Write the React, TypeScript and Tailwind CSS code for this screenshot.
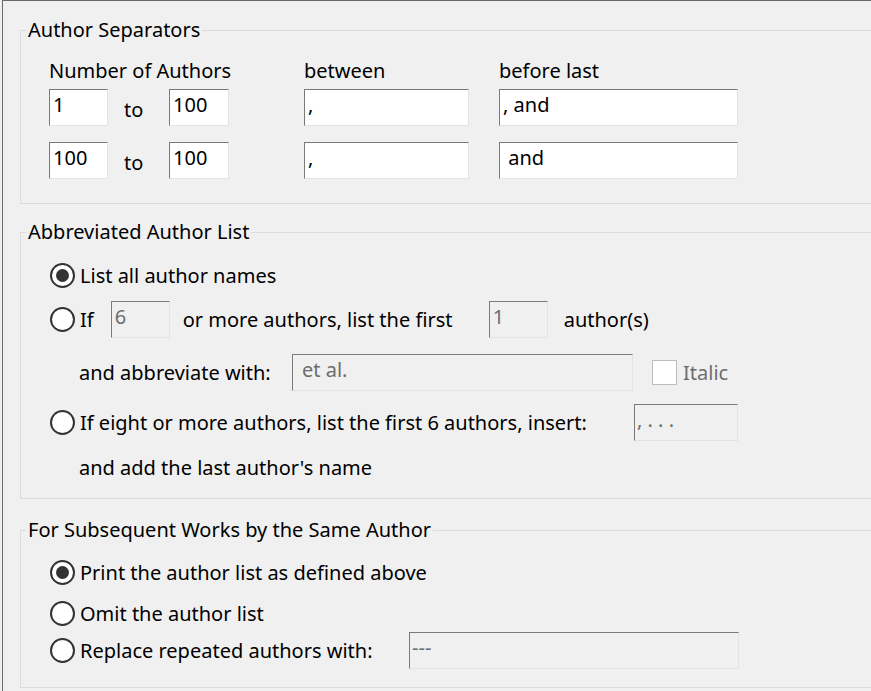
import { FC, ReactNode } from "react";
import clsx from "clsx";

interface FieldProps {
  value: string;
  width: string;
  disabled?: boolean;
  pad?: string;
}

const Field: FC<FieldProps> = ({ value, width, disabled = false, pad = "pl-[3px]" }) => (
  <input
    readOnly
    defaultValue={value}
    className={clsx(
      "h-[37px] shrink-0 border border-t-[#7a7a7a] border-l-[#7a7a7a] border-r-[#e3e3e3] border-b-[#e3e3e3] pb-[6px] text-[20px] outline-none font-['Noto_Sans',sans-serif]",
      disabled ? "bg-[#f0f0f0] text-[#6d6d6d]" : "bg-white text-black",
      pad,
      width
    )}
  />
);

const Radio: FC<{ checked?: boolean; children?: ReactNode }> = ({ checked = false, children }) => (
  <label className="flex items-center">
    <span className="flex h-[25px] w-[25px] shrink-0 items-center justify-center rounded-full border-2 border-[#333333] bg-white">
      {checked && <span className="h-[13px] w-[13px] rounded-full bg-[#333333]" />}
    </span>
    <span className="ml-[5px]">{children}</span>
  </label>
);

const Group: FC<{ title: string; className: string; children: ReactNode }> = ({ title, className, children }) => (
  <fieldset className={clsx("ml-[17px] w-[870px] border border-[#dcdcdc]", className)}>
    <legend className="ml-[5px] px-[2px] leading-[28px]">{title}</legend>
    {children}
  </fieldset>
);

export default function App() {
  return (
    <div className="h-[691px] w-[871px] overflow-hidden bg-[#f0f0f0] pl-[2px] text-[20px] text-black font-['Noto_Sans',sans-serif]">
      <div className="h-full border-l border-t border-[#6a6a6a]">
        {/* Author separators */}
        <Group title="Author Separators" className="mt-[15px] h-[188px]">
          <div className="flex pl-[28px] pt-[13px] leading-[28px]">
            <span className="w-[255px]">Number of Authors</span>
            <span className="w-[195px]">between</span>
            <span>before last</span>
          </div>
          {[
            ["1", "100", ",", ", and"],
            ["100", "100", ",", " and"],
          ].map((row, i) => (
            <div key={i} className={clsx("flex items-center pl-[28px]", i === 0 ? "mt-[4px]" : "mt-[16px]")}>
              <Field value={row[0]} width="w-[59px]" />
              <span className="ml-[16px] mt-[4px] w-[45px]">to</span>
              <Field value={row[1]} width="w-[60px]" />
              <span className="w-[75px]" />
              <Field value={row[2]} width="w-[165px]" />
              <span className="w-[30px]" />
              <Field value={row[3]} width="w-[239px]" />
            </div>
          ))}
        </Group>

        {/* Abbreviated author list */}
        <Group title="Abbreviated Author List" className="mt-[14px] h-[281px]">
          <div className="flex flex-col pl-[29px] pt-[11px]">
            <div className="flex h-[37px] items-center">
              <Radio checked>List all author names</Radio>
            </div>
            <div className="mt-[7px] flex h-[37px] items-center">
              <Radio>If</Radio>
              <span className="w-[17px]" />
              <Field value="6" width="w-[59px]" disabled />
              <span className="ml-[13px] w-[306px]">or more authors, list the first</span>
              <Field value="1" width="w-[59px]" disabled />
              <span className="ml-[16px]">author(s)</span>
            </div>
            <div className="mt-[16px] flex h-[37px] items-center pl-[29px]">
              <span className="w-[213px]">and abbreviate with:</span>
              <Field value="et al." width="w-[341px]" disabled pad="pl-[9px]" />
              <span className="ml-[19px] h-[25px] w-[25px] border border-[#bdbdbd] bg-white" />
              <span className="ml-[6px] text-[#6d6d6d]">Italic</span>
            </div>
            <div className="mt-[13px] flex h-[37px] items-center">
              <span className="w-[584px]">
                <Radio>If eight or more authors, list the first 6 authors, insert:</Radio>
              </span>
              <Field value=", . . ." width="w-[104px]" disabled pad="pl-[2px]" />
            </div>
            <div className="mt-[8px] flex h-[37px] items-center pl-[29px]">and add the last author's name</div>
          </div>
        </Group>

        {/* Subsequent works */}
        <Group title="For Subsequent Works by the Same Author" className="mt-[17px] h-[172px]">
          <div className="flex flex-col pl-[29px] pt-[10px]">
            <div className="flex h-[37px] items-center">
              <Radio checked>Print the author list as defined above</Radio>
            </div>
            <div className="mt-[4px] flex h-[37px] items-center">
              <Radio>Omit the author list</Radio>
            </div>
            <div className="flex h-[37px] items-center">
              <span className="w-[359px]">
                <Radio>Replace repeated authors with:</Radio>
              </span>
              <Field value="---" width="w-[330px]" disabled pad="pl-[2px]" />
            </div>
          </div>
        </Group>
      </div>
    </div>
  );
}
